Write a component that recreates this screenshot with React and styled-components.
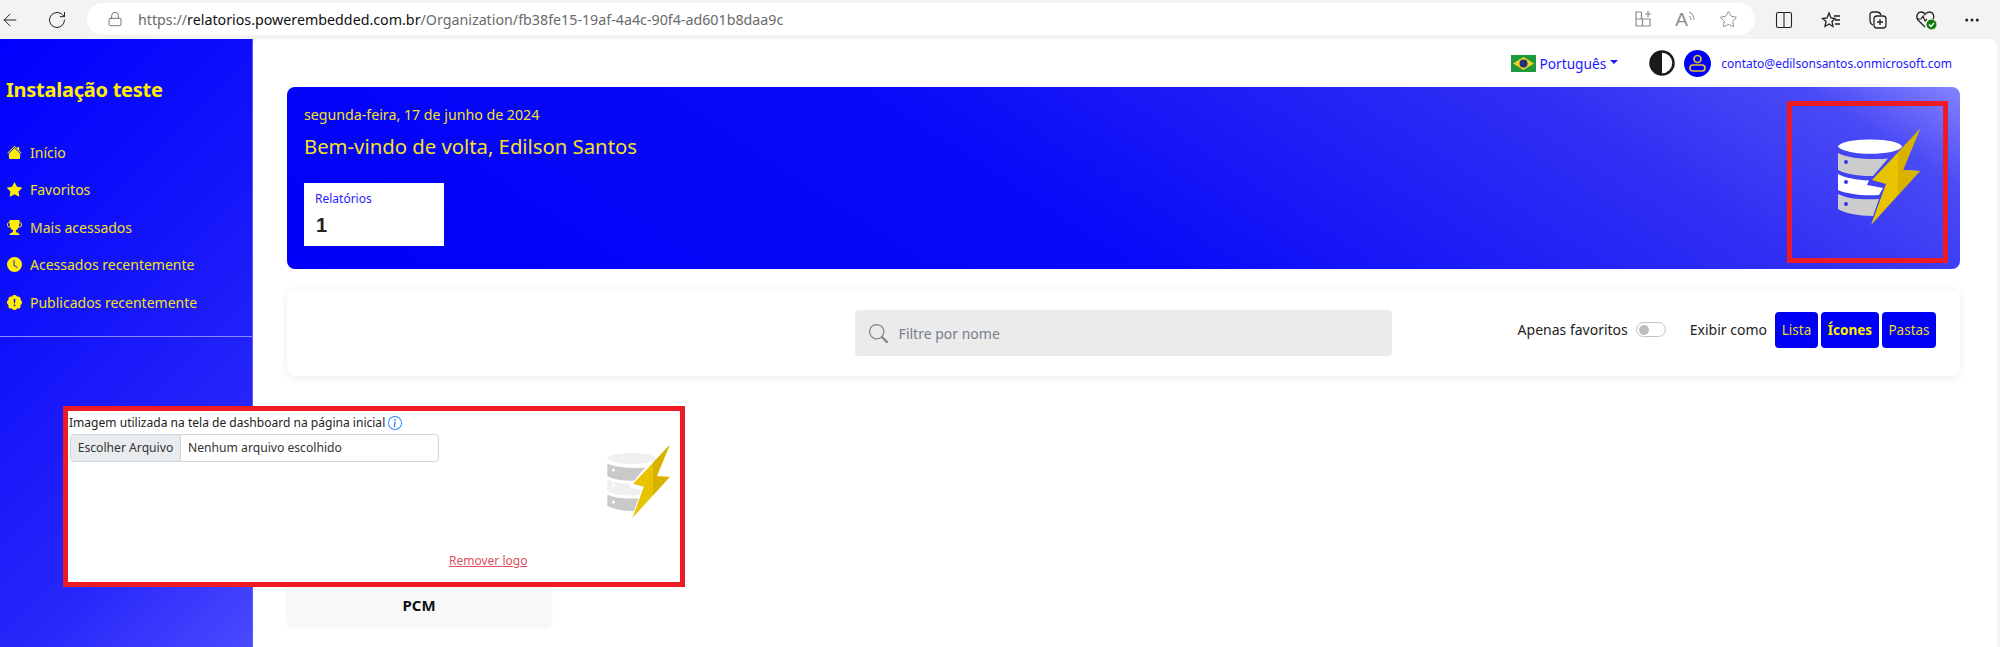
import React from "react";
import styled, { createGlobalStyle } from "styled-components";
import {
  BsHouseFill, BsStarFill, BsTrophyFill, BsClockFill, BsPatchExclamationFill,
  BsInfoCircle, BsSearch,
} from "react-icons/bs";
import { ArrowLeft, RotateCw, Lock, Star, Columns2, Ellipsis } from "lucide-react";

const Global = createGlobalStyle`
  html, body { margin: 0; padding: 0; background: #f3f3f3; }
  * { box-sizing: border-box; }
  body { font-family: "Noto Sans", "Open Sans", Arial, sans-serif; }
`;

const Page = styled.div`
  width: 2000px; height: 647px; overflow: hidden; position: relative;
  display: flex; flex-direction: column; background: #f3f3f3;
`;
const BrowserBar = styled.header`
  height: 39px; flex: none; display: flex; align-items: center; color: #222;
`;
const NavSlot = styled.span`
  width: ${p => p.$w}px; flex: none; display: flex; justify-content: center; align-items: center;
`;
const AddressPill = styled.div`
  width: 1668px; height: 32px; margin-left: ${p => p.$ml || 0}px; border-radius: 16px; background: #fff;
  display: flex; align-items: center; flex: none; padding-left: 20px; margin-top: -1px;
`;
const Url = styled.div`
  margin-left: 15px; font-size: 14.25px; color: #6a6a6a; white-space: nowrap; flex: 1;
  b { font-weight: 400; color: #111; }
`;
const PillIcons = styled.div`
  display: flex; align-items: center; gap: 23px; padding-right: 17px; color: #8a8a8a;
`;
const ToolIcons = styled.div`
  display: flex; align-items: center; color: #222; margin-left: 5px;
`;
const ReadAloud = styled.span`
  display: flex; align-items: flex-start; font-size: 19px; color: #8a8a8a; line-height: 1; font-family: "Liberation Sans", sans-serif;
`;

const Body = styled.div`
  flex: 1; display: flex; min-height: 0; padding-right: 3px;
`;
const Sidebar = styled.aside`
  width: 253px; flex: none; padding-top: 36px;
  background: linear-gradient(135deg, #0000ff 0%, #1010fb 35%, #2828fa 75%, #4a4aff 100%);
  border-right: 1px solid #5a5aff;
`;
const Brand = styled.h1`
  margin: 0; padding-left: 6px; font-size: 20px; line-height: 30px; font-weight: 700; color: #ffee00;
  letter-spacing: -0.25px;
`;
const Nav = styled.nav`
  margin-top: 28.5px; display: flex; flex-direction: column; padding-bottom: 14.5px;
  border-bottom: 1px solid #8a8aff;
`;
const NavItem = styled.a`
  height: 37.5px; display: flex; align-items: center; gap: 8px; padding-left: 7px;
  font-size: 14px; color: #f2e020;
  svg { color: #ffee00; flex: none; }
`;
const Main = styled.main`
  flex: 1; min-width: 0; background: #fff; border-radius: 8px 8px 0 0; padding: 0 37px 0 34px;
`;
const TopRow = styled.div`
  height: 48px; display: flex; align-items: center; justify-content: flex-end; margin-right: 8px;
`;
const Lang = styled.div`
  display: flex; align-items: center; gap: 5px; color: #1a1aff; font-size: 13.7px; margin-right: 31px;
  &::after { content: ""; border: 4.5px solid transparent; border-top-color: #1a1aff; border-bottom: 0; margin-left: -1px; margin-top: -3px; }
`;
const Avatar = styled.span`
  width: 27px; height: 27px; border-radius: 50%; background: #0000ff; display: flex;
  align-items: center; justify-content: center; margin: 0 10px 0 9px;
`;
const Email = styled.span`
  font-size: 12px; color: #1a1aff;
`;
const Hero = styled.section`
  height: 182px; border-radius: 8px; padding: 14px 12px 6px 17px; display: flex; justify-content: space-between;
  background: linear-gradient(33deg, #0000f8 0%, #0a0af8 45%, #3030f4 78%, #4a4af6 92%, #8484ff 100%);
`;
const DateLine = styled.div`
  margin-top: 4px; font-size: 14.2px; line-height: 20px; color: #f5e020;
`;
const Welcome = styled.h2`
  margin: 6px 0 0; font-size: 20.3px; line-height: 30px; font-weight: 400; color: #f5e020;
`;
const StatCard = styled.div`
  margin-top: 22px; width: 140px; height: 63px; background: #fff; padding: 7px 11px;
`;
const StatLabel = styled.div`
  font-size: 12px; line-height: 18px; color: #2a1aff;
`;
const StatValue = styled.div`
  margin: 4px 0 0 1px; font-size: 20px; line-height: 26px; font-weight: 700; color: #222;
  font-family: "Liberation Sans", Arial, sans-serif;
`;
const LogoFrame = styled.div`
  width: 161px; height: 162px; border: 5px solid #ed1c24; display: flex; align-items: center;
  justify-content: center; padding: 0 0 10px 23px;
`;
const FilterPanel = styled.section`
  margin-top: 22px; height: 85px; border-radius: 8px; background: #fff; padding: 0 24px 0 0;
  box-shadow: 0 1px 8px rgba(40,40,90,.09); display: flex; align-items: center; justify-content: flex-end; gap: 126px;
`;
const SearchBox = styled.label`
  width: 537px; height: 46px; margin-top: -1px; border-radius: 4px; background: #ebebeb; display: flex; align-items: center;
  padding-left: 14px; gap: 9px; color: #8a8583;
`;
const SearchInput = styled.input`
  border: 0; background: none; outline: 0; flex: 1; font: 14px "Noto Sans", sans-serif; color: #333;
  &::placeholder { color: #76808c; opacity: 1; }
`;
const Controls = styled.div`
  display: flex; align-items: center; font-size: 14px; color: #222; margin-bottom: 8px;
`;
const Toggle = styled.span`
  width: 30px; height: 15px; border: 1px solid #c4c4c4; border-radius: 8px; margin: 0 24px 0 8px; display: flex;
  align-items: center; padding-left: 2px;
  &::before { content: ""; width: 10px; height: 10px; border-radius: 50%; background: #bdbdbd; }
`;
const ViewBtn = styled.button`
  height: 36px; width: ${p => p.$w}px; margin-left: ${p => p.$ml}px; padding: 0; border: 0; border-radius: 4px; background: #0000f5;
  font: ${p => (p.$active ? 700 : 400)} 13.5px "Noto Sans", sans-serif; color: ${p => (p.$active ? "#ffee00" : "#e8d830")};
`;
const ReportCard = styled.article`
  margin-top: 44px; width: 264px; height: 205px; border-radius: 4px; background: #f8f8f8; display: flex; align-items: flex-end;
  justify-content: center; padding-bottom: 10px; font-size: 15px; line-height: 20px; font-weight: 700; color: #111;
  box-shadow: 0 2px 4px rgba(0,0,0,.06);
`;
const Callout = styled.div`
  position: absolute; left: 63px; top: 406px; width: 622px; height: 181px; border: 5px solid #ed1c24; background: #fff;
  display: flex; color: #333;
`;
const UploadCol = styled.div`
  width: 371px; flex: none; padding-left: 1px; padding-top: 3px;
`;
const UploadLabel = styled.div`
  display: flex; align-items: center; gap: 3px; font-size: 12.05px; line-height: 18px; color: #222; white-space: nowrap;
  svg { color: #2a7fff; }
`;
const FileField = styled.div`
  margin: 2px 0 0 1px; height: 28px; border: 1px solid #ced4da; border-radius: 4px; display: flex; font-size: 12.15px; line-height: 26px;
  overflow: hidden; color: #333;
`;
const FileBtn = styled.span`
  width: 110px; background: #e9ecef; border-right: 1px solid #ced4da; text-align: center; flex: none;
`;
const FileName = styled.span`
  padding-left: 7px;
`;
const PreviewCol = styled.div`
  flex: 1; display: flex; flex-direction: column; padding: 34px 10px 0 10px;
`;
const PreviewLogo = styled.div`
  align-self: flex-end; display: flex;
`;
const RemoveLink = styled.a`
  margin-top: 34px; align-self: flex-start; font-size: 12px; line-height: 18px; color: #e0505f; text-decoration: underline;
`;

function Logo({ width, height, top, slice, dot }) {
  return (
    <svg width={width} height={height} viewBox="0 0 82 96">
      <path d="M0 18C0 13.500 15 10.500 32 10.500S64 13.500 64 18C62 20 58 22 53 23C38 26 10 26 0 18Z" fill={top} />
      <path d="M0 24C10 30 35 31 50 29.500L35 47C20 47 8 45 0 41Z" fill={slice} />
      <path d="M0 45C8 49 18 51 31 51.500L29 56L45 59L41 66C25 67 8 65 0 61Z" fill={top} />
      <path d="M0 65C10 70 25 71 41 70L35 87C20 87 6 84 0 80Z" fill={slice} />
      <circle cx="8" cy="33" r="2" fill={dot} /><circle cx="8" cy="53" r="2" fill={dot} /><circle cx="8" cy="75" r="2" fill={dot} />
      <path d="M82 0L34 51L48 55L33 96L82 42L65 41Z" fill="#e8c400" />
      <path d="M82 0L60 23.500V66L82 42L65 41Z" fill="#d9b200" />
    </svg>
  );
}

const Flag = () => (
  <svg width="25" height="17" viewBox="0 0 25 17">
    <rect width="25" height="17" fill="#1d9a3c" />
    <path d="M12.500 2L23 8.500L12.500 15L2 8.500Z" fill="#f2d21e" />
    <circle cx="12.500" cy="8.500" r="4" fill="#26337a" />
  </svg>
);
const Contrast = () => (
  <svg width="26" height="26" viewBox="0 0 26 26">
    <circle cx="13" cy="13" r="11.500" fill="#fff" stroke="#1a1a1a" strokeWidth="2.500" />
    <path d="M13 1.500A11.500 11.500 0 0 0 13 24.500Z" fill="#1a1a1a" />
  </svg>
);
const PersonIcon = () => (
  <svg width="17" height="18" viewBox="0 0 17 18" fill="none" stroke="#e8c030" strokeWidth="1.700">
    <circle cx="8.500" cy="5" r="3.500" />
    <path d="M4 11H13Q16 11 16 14T13 17H4Q1 17 1 14T4 11Z" />
  </svg>
);
const TabGrid = () => (
  <svg width="18" height="18" viewBox="0 0 18 18" fill="none" stroke="#8a8a8a" strokeWidth="1.200">
    <path d="M7.500 2H2V16H16V9H2M8.500 9V16M7.500 2V9" />
    <path d="M14 1V7M11 4H17" />
  </svg>
);
const Waves = () => (
  <svg width="8" height="12" viewBox="0 0 8 12" fill="none" stroke="#8a8a8a" strokeWidth="1">
    <path d="M1 6Q3 7.500 3 10M1 2Q6 4 6 10" />
  </svg>
);
const FavList = () => (
  <svg width="20" height="18" viewBox="0 0 20 18" fill="none" stroke="#222" strokeWidth="1.300">
    <path d="M8 2L10 7L14 7.500L11 10.500L12 15.500L8 13L4 15.500L5 10.500L1.500 7.500L6 7Z" />
    <path d="M13 5H19M14 9H19M14 13H19" />
  </svg>
);
const Collections = () => (
  <svg width="20" height="20" viewBox="0 0 20 20" fill="none" stroke="#222" strokeWidth="1.300">
    <path d="M5 15Q2 14 2 10V5Q2 2 5 2H9Q12 2 13 5" />
    <rect x="6" y="6" width="12" height="12" rx="3" />
    <path d="M12 9V15M9 12H15" />
  </svg>
);
const Health = () => (
  <svg width="22" height="20" viewBox="0 0 22 20" fill="none">
    <path d="M10 17L3 10C0 6 3 2 6 2C8 2 9.500 3 10 4.500C11 3 12.500 2 14.500 2C18 2 20 6 18 9" stroke="#222" strokeWidth="1.300" />
    <path d="M2 9H6L8 6L10 11L12 9" stroke="#222" strokeWidth="1.100" />
    <circle cx="16.500" cy="14.500" r="5" fill="#107c10" />
    <path d="M14 14.500L16 16.500L19 13" stroke="#fff" strokeWidth="1.200" />
  </svg>
);

const navItems = [
  ["Início", BsHouseFill],
  ["Favoritos", BsStarFill],
  ["Mais acessados", BsTrophyFill],
  ["Acessados recentemente", BsClockFill],
  ["Publicados recentemente", BsPatchExclamationFill],
];

export default function App() {
  return (
    <Page>
      <Global />
      <BrowserBar>
        <NavSlot $w={20}><ArrowLeft size={22} strokeWidth={1.2} /></NavSlot>
        <NavSlot $w={74}><RotateCw size={20} strokeWidth={1.2} /></NavSlot>
        <AddressPill $ml={-7}>
          <Lock size={16} strokeWidth={1.2} color="#555" />
          <Url>https://<b>relatorios.powerembedded.com.br</b>/Organization/fb38fe15-19af-4a4c-90f4-ad601b8daa9c</Url>
          <PillIcons>
            <TabGrid />
            <ReadAloud>A<Waves /></ReadAloud>
            <Star size={19} strokeWidth={1.2} />
          </PillIcons>
        </AddressPill>
        <ToolIcons>
          <NavSlot $w={47}><Columns2 size={20} strokeWidth={1.3} /></NavSlot>
          <NavSlot $w={47}><FavList /></NavSlot>
          <NavSlot $w={48}><Collections /></NavSlot>
          <NavSlot $w={47}><Health /></NavSlot>
          <NavSlot $w={46}><Ellipsis size={18} strokeWidth={2} /></NavSlot>
        </ToolIcons>
      </BrowserBar>
      <Body>
        <Sidebar>
          <Brand>Instalação teste</Brand>
          <Nav>
            {navItems.map(([label, Icon]) => (
              <NavItem key={label}><Icon size={15} />{label}</NavItem>
            ))}
          </Nav>
        </Sidebar>
        <Main>
          <TopRow>
            <Flag />
            <Lang>&nbsp;Português</Lang>
            <Contrast />
            <Avatar><PersonIcon /></Avatar>
            <Email>contato@edilsonsantos.onmicrosoft.com</Email>
          </TopRow>
          <Hero>
            <div>
              <DateLine>segunda-feira, 17 de junho de 2024</DateLine>
              <Welcome>Bem-vindo de volta, Edilson Santos</Welcome>
              <StatCard>
                <StatLabel>Relatórios</StatLabel>
                <StatValue>1</StatValue>
              </StatCard>
            </div>
            <LogoFrame>
              <Logo width={82} height={96} top="#ffffff" slice="#cccccc" dot="#3434ee" />
            </LogoFrame>
          </Hero>
          <FilterPanel>
            <SearchBox>
              <BsSearch size={19} />
              <SearchInput placeholder="Filtre por nome" />
            </SearchBox>
            <Controls>
              Apenas favoritos
              <Toggle />
              Exibir como
              <ViewBtn $w={43} $ml={8}>Lista</ViewBtn>
              <ViewBtn $w={58} $ml={3} $active>Ícones</ViewBtn>
              <ViewBtn $w={54} $ml={3}>Pastas</ViewBtn>
            </Controls>
          </FilterPanel>
          <ReportCard>PCM</ReportCard>
        </Main>
      </Body>
      <Callout>
        <UploadCol>
          <UploadLabel>Imagem utilizada na tela de dashboard na página inicial <BsInfoCircle size={14} /></UploadLabel>
          <FileField>
            <FileBtn>Escolher Arquivo</FileBtn>
            <FileName>Nenhum arquivo escolhido</FileName>
          </FileField>
        </UploadCol>
        <PreviewCol>
          <PreviewLogo>
            <Logo width={63} height={73} top="#f0f0f0" slice="#c9c9c9" dot="#ffffff" />
          </PreviewLogo>
          <RemoveLink>Remover logo</RemoveLink>
        </PreviewCol>
      </Callout>
    </Page>
  );
}
